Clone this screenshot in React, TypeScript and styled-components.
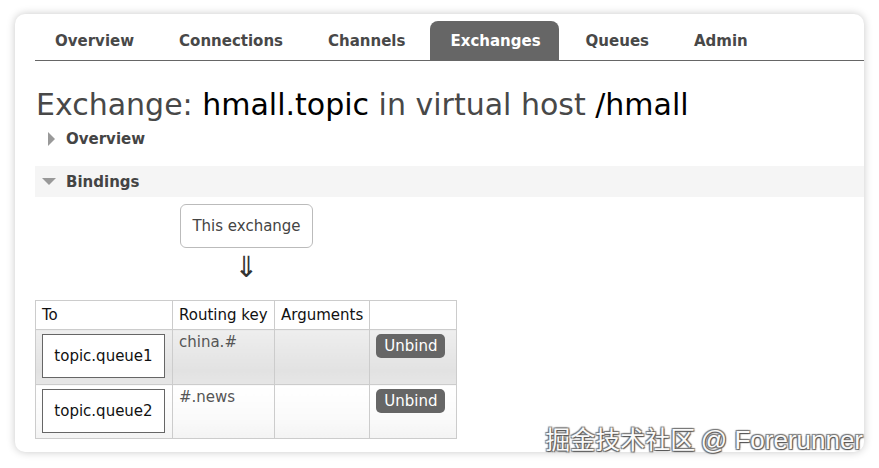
import styled, { createGlobalStyle } from "styled-components";

const GlobalStyle = createGlobalStyle`
  html, body {
    margin: 0;
    padding: 0;
    background: #fff;
  }
  body {
    font-family: "DejaVu Sans", Verdana, sans-serif;
    width: 879px;
    height: 468px;
    overflow: hidden;
  }
`;

const Page = styled.div`
  position: relative;
  width: 879px;
  height: 468px;
  padding: 14px 15px 16px 15px;
  box-sizing: border-box;
`;

const Card = styled.div`
  height: 100%;
  background: #fff;
  border-radius: 10px;
  box-shadow: 0 0 9px rgba(0, 0, 0, 0.22);
  padding: 7px 0 0 20px;
  box-sizing: border-box;
  overflow: hidden;
  display: flex;
  flex-direction: column;
`;

const TabBar = styled.ul`
  display: flex;
  gap: 7px;
  margin: 0;
  padding: 0;
  list-style: none;
  border-bottom: 1px solid #666;
`;

const Tab = styled.li<{ $active?: boolean }>`
  height: 39px;
  padding: 0 18px 0 20px;
  display: flex;
  align-items: center;
  font-size: 15px;
  font-weight: bold;
  color: ${(p) => (p.$active ? "#fff" : "#484848")};
  background: ${(p) => (p.$active ? "#666" : "transparent")};
  border-radius: 8px 8px 0 0;
`;

const Heading = styled.h1`
  margin: 26px 0 0 1px;
  font-size: 30px;
  font-weight: normal;
  color: #484848;
  line-height: 36px;
  white-space: nowrap;
  span {
    color: #000;
  }
`;

const Section = styled.div<{ $open?: boolean }>`
  display: flex;
  align-items: center;
  height: 31px;
  margin-top: ${(p) => (p.$open ? "12px" : "0")};
  padding-left: ${(p) => (p.$open ? "7px" : "13px")};
  gap: ${(p) => (p.$open ? "10px" : "11px")};
  font-size: 15px;
  font-weight: bold;
  color: #444;
  background: ${(p) => (p.$open ? "#f5f5f5" : "transparent")};
`;

const TriRight = styled.span`
  width: 0;
  height: 0;
  border-top: 7px solid transparent;
  border-bottom: 7px solid transparent;
  border-left: 7px solid #999;
`;

const TriDown = styled.span`
  width: 0;
  height: 0;
  border-left: 7px solid transparent;
  border-right: 7px solid transparent;
  border-top: 7px solid #999;
`;

const Flow = styled.div`
  display: flex;
  flex-direction: column;
  align-items: center;
  width: 423px;
`;

const ExchangeBox = styled.div`
  margin-top: 7px;
  width: 133px;
  height: 44px;
  box-sizing: border-box;
  border: 1px solid #bbb;
  border-radius: 6px;
  display: flex;
  align-items: center;
  justify-content: center;
  font-size: 15px;
  color: #444;
`;

const Arrow = styled.div`
  margin-top: 3px;
  font-size: 29px;
  line-height: 32px;
  color: #333;
`;

const Table = styled.table`
  margin-top: 17px;
  border-collapse: collapse;
  font-size: 15px;
  width: 422px;
  td,
  th {
    border: 1px solid #ccc;
    padding: 4px 6px;
    text-align: left;
    vertical-align: top;
  }
  th {
    font-weight: normal;
    color: #111;
    height: 29px;
    box-sizing: border-box;
    vertical-align: middle;
  }
`;

const Row = styled.tr<{ $alt?: boolean }>`
  td {
    height: ${(p) => (p.$alt ? "55px" : "54px")};
    box-sizing: border-box;
    background: ${(p) =>
      p.$alt
        ? "linear-gradient(to bottom, #eee 0%, #e2e2e2 75%, #e6e6e6 100%)"
        : "linear-gradient(to bottom, #fff 0%, #f9f9f9 70%, #f3f3f3 100%)"};
  }
`;

const QueueBox = styled.div`
  width: 123px;
  height: 44px;
  box-sizing: border-box;
  border: 1px solid #666;
  background: #fff;
  display: flex;
  align-items: center;
  justify-content: center;
  color: #111;
`;

const KeyText = styled.div`
  color: #555;
  line-height: 20px;
  margin-top: -2px;
`;

const UnbindButton = styled.button`
  font-family: "DejaVu Sans", Verdana, sans-serif;
  font-size: 15px;
  color: #fff;
  background: #666;
  border: none;
  border-radius: 5px;
  height: 24px;
  padding: 0 8px;
  cursor: pointer;
`;

const Watermark = styled.div`
  position: absolute;
  right: 16px;
  bottom: 12px;
  font-family: "Noto Sans CJK SC", sans-serif;
  font-size: 25px;
  line-height: 32px;
  color: #fafafa;
  text-shadow: 1px 1px 1px #555, -1px -1px 1px #777, 1px -1px 1px #777, -1px 1px 1px #777;
  span {
    font-family: "Liberation Sans", sans-serif;
    font-size: 26px;
  }
`;

const tabs = ["Overview", "Connections", "Channels", "Exchanges", "Queues", "Admin"];

const bindings = [
  { to: "topic.queue1", key: "china.#" },
  { to: "topic.queue2", key: "#.news" },
];

export default function App() {
  return (
    <Page>
      <GlobalStyle />
      <Card>
        <TabBar>
          {tabs.map((t) => (
            <Tab key={t} $active={t === "Exchanges"}>
              {t}
            </Tab>
          ))}
        </TabBar>
        <Heading>
          Exchange: <span>hmall.topic</span> in virtual host <span>/hmall</span>
        </Heading>
        <Section>
          <TriRight />
          Overview
        </Section>
        <Section $open>
          <TriDown />
          Bindings
        </Section>
        <Flow>
          <ExchangeBox>This exchange</ExchangeBox>
          <Arrow>⇓</Arrow>
        </Flow>
        <Table>
          <thead>
            <tr>
              <th style={{ width: 137 }}>To</th>
              <th style={{ width: 102 }}>Routing key</th>
              <th style={{ width: 95 }}>Arguments</th>
              <th></th>
            </tr>
          </thead>
          <tbody>
            {bindings.map((b, i) => (
              <Row key={b.to} $alt={i === 0}>
                <td>
                  <QueueBox>{b.to}</QueueBox>
                </td>
                <td>
                  <KeyText>{b.key}</KeyText>
                </td>
                <td></td>
                <td>
                  <UnbindButton>Unbind</UnbindButton>
                </td>
              </Row>
            ))}
          </tbody>
        </Table>
      </Card>
      <Watermark>
        掘金技术社区 <span>@ Forerunner</span>
      </Watermark>
    </Page>
  );
}
